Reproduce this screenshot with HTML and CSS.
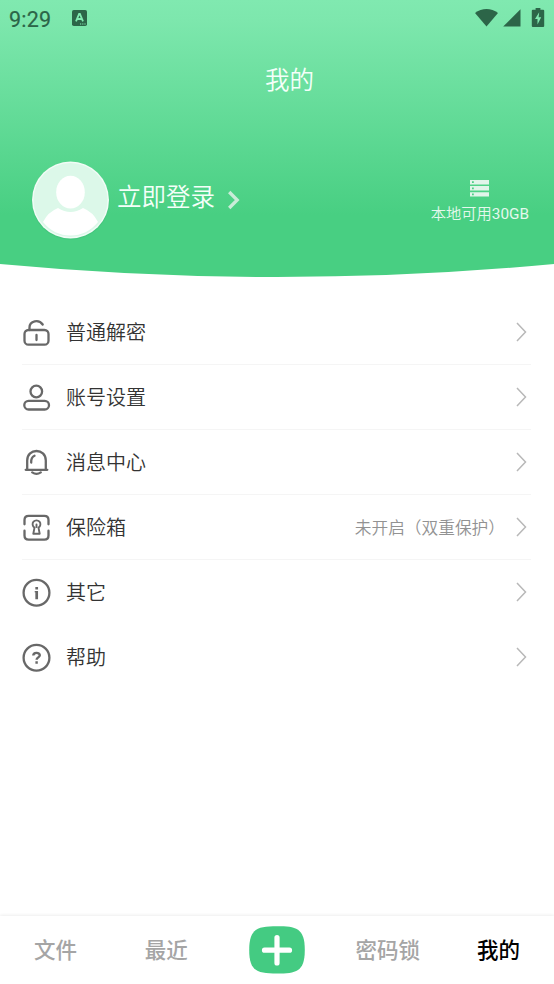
FILE: index.html
```html
<!DOCTYPE html>
<html lang="zh-CN">
<head>
<meta charset="utf-8">
<title>我的</title>
<link rel="stylesheet" href="styles.css">
</head>
<body>
<div class="app">
  <header class="hero">
    <div class="status">
      <span class="clock">9:29</span>
      <svg class="input-mode" width="15" height="16" viewBox="0 0 15 16"><rect width="15" height="16" rx="1.8" fill="#2c6548"/><path d="M4 11.400 7.100 3.900h.8L11 11.400M5.200 9h4.600" fill="none" stroke="#80e9b0" stroke-width="1.800"/><path d="M8 14h1.200M10.200 14h1.200M12.400 14h1.200" stroke="#80e9b0" stroke-width="1.100"/></svg>
      <svg class="indicators" width="70" height="20" viewBox="0 0 70 20" fill="#2c6548"><path d="M0 5C6.800-.4 16.200-.4 23 5L11.500 18.500z"/><path d="M45.500 1.200v17.300h-17.300z"/><path d="M60.600 0h4.800v1.700h2.800q1 0 1 1v15.200q0 1-1 1h-10.400q-1 0-1-1v-15.200q0-1 1-1h2.800z"/><path d="M64.200 4.200 60 11h2.500v5.400l3.700-7.200h-2.600z" fill="#80e9b0"/></svg>
    </div>
    <h1 class="title">我的</h1>
    <div class="profile">
      <svg class="avatar" width="80" height="80" viewBox="0 0 80 80"><defs><clipPath id="face"><circle cx="39.500" cy="40" r="37"/></clipPath></defs><circle cx="39.500" cy="40.800" r="39" fill="#3fba75" opacity=".4"/><circle cx="39.500" cy="40" r="38.500" fill="#f1fcf6"/><circle cx="39.500" cy="40" r="37" fill="#dcf8e9"/><ellipse cx="39.500" cy="32.200" rx="14.300" ry="16.400" fill="#fff"/><path d="M27 48Q39.500 56 52 48Q62 52 67 62Q56 75.500 39.500 75.500T12 62Q17 52 27 48z" fill="#fff" clip-path="url(#face)"/></svg>
      <span class="login">立即登录</span>
      <svg class="login-arrow" width="14" height="20" viewBox="0 0 14 20"><path d="m2.200 2 8 8-8 8" fill="none" stroke="#c9ecd8" stroke-width="3.300"/></svg>
      <div class="storage">
        <svg width="19" height="17" viewBox="0 0 19 17"><path d="M0 0h19v4.400H0zM0 6.100h19v4.400H0zM0 12.200h19v4.400H0z" fill="#e1f5ea"/><path d="M2 1.300h1.800v1.800H2zM2 7.400h1.800v1.800H2zM2 13.500h1.800v1.800H2z" fill="#4dcf86"/></svg>
        <span>本地可用<b>30GB</b></span>
      </div>
    </div>
    <svg class="curve" width="554" height="14" viewBox="0 0 554 14"><path d="M0 0Q277 26 554 0V14H0z" fill="#fff"/></svg>
  </header>

  <main class="menu">
    <a class="row">
      <svg class="icon" viewBox="0 0 30 30"><rect x="2.500" y="12" width="24" height="14.700" rx="4"/><path d="M7.500 12V9.500C7.500 2.500 17 .9 20.700 6.500M14.500 17v5"/></svg>
      <span>普通解密</span>
      <svg class="go" viewBox="0 0 11 20"><path d="m1 1 8.500 9L1 19"/></svg>
    </a>
    <a class="row">
      <svg class="icon" viewBox="0 0 30 30"><circle cx="14.300" cy="8.500" r="5.800"/><rect x="2.300" y="17.800" width="24.700" height="8.700" rx="4.300"/></svg>
      <span>账号设置</span>
      <svg class="go" viewBox="0 0 11 20"><path d="m1 1 8.500 9L1 19"/></svg>
    </a>
    <a class="row">
      <svg class="icon" viewBox="0 0 30 30"><path d="M3.700 21.800H25.300M5.200 21.500V12.500C5.200-.2 23.800-.2 23.800 12.500V21.500M9.200 14.500Q8.900 9.300 12.500 7.700M10.200 24.400Q14.500 27.400 18.800 24.400"/></svg>
      <span>消息中心</span>
      <svg class="go" viewBox="0 0 11 20"><path d="m1 1 8.500 9L1 19"/></svg>
    </a>
    <a class="row">
      <svg class="icon" viewBox="0 0 30 30"><path d="M2.500 11.300V7q0-4.200 4.200-4.200H22.300q4.200 0 4.200 4.200V11.300M2.500 17.700V22.500q0 4.200 4.200 4.200H22.300q4.200 0 4.200-4.200V17.700"/><path d="M12.500 14.600A3.900 3.900 0 1 1 16.500 14.600L17.700 20.700H11.300zM14.500 11.500v2.500" stroke-width="1.900"/></svg>
      <span>保险箱</span>
      <em>未开启（双重保护）</em>
      <svg class="go" viewBox="0 0 11 20"><path d="m1 1 8.500 9L1 19"/></svg>
    </a>
    <a class="row plain">
      <svg class="icon" viewBox="0 0 30 30"><circle cx="14.500" cy="14.700" r="12.900"/><path d="M14.700 13v8.200M14.700 9v2.500" stroke-width="2.700" stroke-linecap="butt"/><path d="M12.700 13.700h1.500" stroke-width="1.300" stroke-linecap="butt"/></svg>
      <span>其它</span>
      <svg class="go" viewBox="0 0 11 20"><path d="m1 1 8.500 9L1 19"/></svg>
    </a>
    <a class="row plain">
      <svg class="icon" viewBox="0 0 30 30"><circle cx="14.500" cy="14.700" r="12.900"/><path d="M11.300 12.500C11.300 9 17.800 9 17.800 12.300C17.700 14.400 14.700 14.400 14.600 16.800M14.600 18.200v2.500" stroke-width="2.400" stroke-linecap="butt"/></svg>
      <span>帮助</span>
      <svg class="go" viewBox="0 0 11 20"><path d="m1 1 8.500 9L1 19"/></svg>
    </a>
  </main>

  <nav class="tabs">
    <a>文件</a>
    <a>最近</a>
    <a class="add"><svg width="56" height="48" viewBox="0 0 56 48"><path d="M28 .3C47 .3 55.800 2 55.800 24S47 47.500 28 47.500.2 46 .2 24 9 .3 28 .3z" fill="#44cb82"/><path d="M28 11.500v25.400M15.500 24.200h25" stroke="#fff" stroke-width="5.200" stroke-linecap="round"/></svg></a>
    <a>密码锁</a>
    <a class="active">我的</a>
  </nav>
</div>
</body>
</html>
```

FILE: styles.css
```css
* { box-sizing: border-box; }
body {
  margin: 0;
  background: #fff;
  color: #333;
  font-family: Roboto, "Noto Sans CJK SC", sans-serif;
  font-weight: 350;
}
svg { display: block; flex: none; }
.app { height: 984px; display: flex; flex-direction: column; overflow: hidden; }
.hero {
  height: 278px;
  display: flex;
  flex-direction: column;
  background: linear-gradient(#80e9b0 0, #7de7ad 20px, #48cf82 215px);
  color: #f4fff9;
}
.status { height: 38px; display: flex; align-items: center; padding: 0 9px; }
.clock { width: 63px; padding-top: 1px; font-size: 21.5px; line-height: 38px; letter-spacing: .2px; color: #2c6548; font-weight: 400; -webkit-text-stroke: .2px #2c6548; }
.input-mode { margin-bottom: 2px; }
.indicators { margin: 0 0 2px auto; }
.title {
  margin: 26px 0 0 25px;
  text-align: center;
  font-size: 24.5px;
  line-height: 34px;
  font-weight: 350;
}
.profile { display: flex; align-items: center; height: 80px; margin: 62px 25px 0 31px; }
.login { margin: -5px 0 0 6px; font-size: 24.5px; line-height: 36px; }
.login-arrow { margin-left: 12px; }
.storage { margin: 3px 0 0 auto; display: flex; flex-direction: column; align-items: center; gap: 7px; font-size: 15.3px; line-height: 20px; color: #e4f8ed; white-space: nowrap; }
.storage b { font-weight: 400; }
.curve { margin-top: auto; }
.menu { padding: 22px 23px 0 22px; }
.row { height: 65px; display: flex; align-items: center; border-bottom: 1px solid #f5f5f5; font-size: 20px; }
.row.plain { border-bottom-color: transparent; }
.row > span { margin: -1px 0 0 14px; }
.icon { width: 30px; height: 30px; margin-top: 1px; fill: none; stroke: #686868; stroke-width: 2.3; stroke-linecap: round; stroke-linejoin: round; }
.go { width: 11px; height: 20px; margin: 0 4px 0 auto; fill: none; stroke: #b8b8b8; stroke-width: 1.5; }
.row em { margin: -1px 0 0 auto; padding-right: 11px; font-size: 16.7px; font-style: normal; color: #929292; }
.row em + .go { margin-left: 0; }
.tabs {
  height: 68px;
  margin-top: auto;
  display: grid;
  grid-template-columns: repeat(5, 1fr);
  align-items: center;
  justify-items: center;
  box-shadow: 0 -1px 3px rgba(0, 0, 0, .07);
  font-size: 21.5px;
  font-weight: 500;
  color: #a5a5a5;
}
.tabs a { padding-bottom: 4px; }
.tabs .add { padding-bottom: 0; }
.tabs .active { color: #000; }
```
